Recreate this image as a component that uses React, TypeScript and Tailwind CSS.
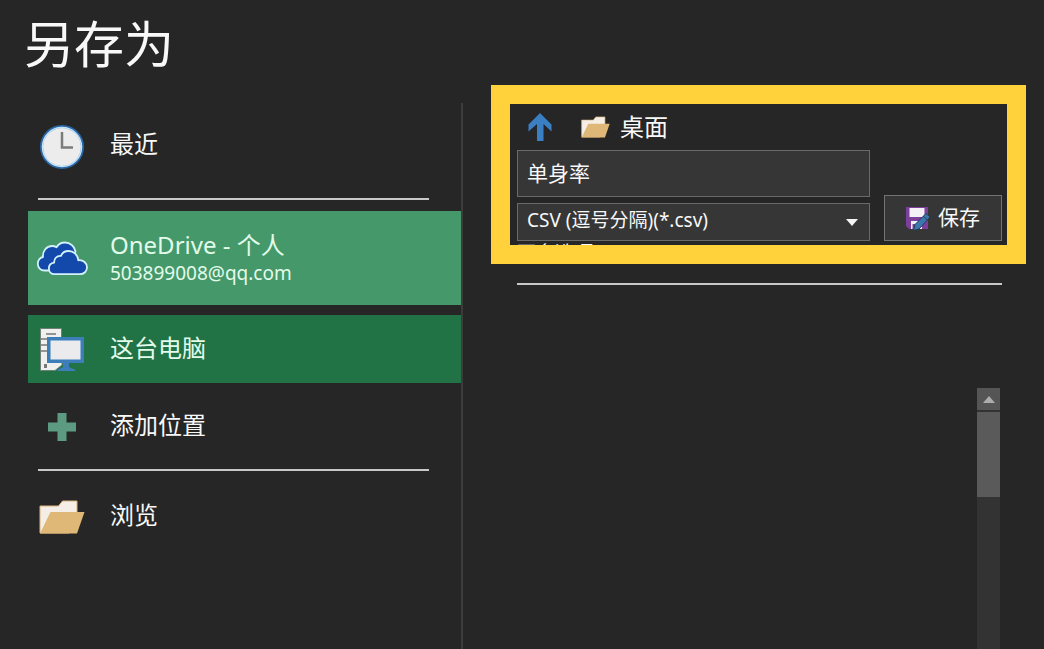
import { useState, type ReactNode } from 'react';

interface PlaceProps {
  icon: ReactNode;
  title: string;
  detail?: string;
  className: string;
  onClick: () => void;
}

function ClockIcon() {
  return (
    <svg width="46" height="46" viewBox="0 0 46 46" aria-hidden="true">
      <circle cx="23" cy="24" r="20.500" fill="#ececec" stroke="#2a68a8" strokeWidth="3" />
      <circle cx="23" cy="24" r="19.500" fill="none" stroke="#c3e2f8" strokeWidth="1.500" />
      <path d="M23 9v15.500h11" fill="none" stroke="#7b7b7b" strokeWidth="2.500" />
    </svg>
  );
}

function CloudIcon() {
  return (
    <svg width="52" height="36" viewBox="0 0 52 36" aria-hidden="true">
      <g fill="#1249ab" stroke="#d3f1fb" strokeWidth="1.800" strokeLinejoin="round">
        <path d="M14 29.500H8.500C4.500 29.500 1.800 26.500 1.800 22.800c0-3.800 2.600-6.300 5.200-6.800C6.500 10 10.500 5 16 5c2 0 3.200.4 4.500 1.200C22.300 3.200 25.300 1.500 29 1.500c5 0 9.500 3.500 10.500 9L34 24z" />
        <path d="M18.500 33.200c-3.400 0-5.600-2.500-5.600-5.700 0-3.200 2.200-5.500 5.300-5.800-.4-4 2.600-6.900 6-6.900h.8C26.200 12 29 10 32.500 10c5.200 0 9.300 3.800 9.800 9.300 4.900-.6 8.700 2.700 8.700 7 0 4-3 6.900-7 6.900z" />
      </g>
    </svg>
  );
}

function ComputerIcon() {
  return (
    <svg width="46" height="46" viewBox="0 0 46 46" aria-hidden="true">
      <path d="M1.500 1.500h21v9H10V35h13v3l-7 5.500H1.500z" fill="#f0f0ee" stroke="#6d8175" />
      <path d="M7 7h10" stroke="#777" strokeWidth="1.500" />
      <path d="M2 12h7M2 18h6M2 24h6" stroke="#777" strokeWidth="1.500" />
      <path d="M5 37h3v4H5z" fill="#777" />
      <path d="M8 10h37v26H8z" fill="#3b7eb9" />
      <path d="M11.500 13.500h30v19h-30z" fill="#ebebee" />
      <path d="M24 36h6v4c2 1.500 5 1.500 7 4H18c1-2.500 4-2.500 6-4z" fill="#3b7eb9" />
    </svg>
  );
}

function PlusIcon() {
  return (
    <svg width="30" height="30" viewBox="0 0 30 30" aria-hidden="true">
      <path d="M10.500 1h9v9.500H29v9h-9.500V29h-9v-9.500H1v-9h9.500z" fill="#5c9b82" />
    </svg>
  );
}

function FolderIcon({ className }: { className: string }) {
  return (
    <svg className={className} viewBox="0 0 46 34" aria-hidden="true">
      <path d="M1 33V6h18.500l4-5H38v12L30 33z" fill="#f5eee6" stroke="#d9b27c" strokeLinejoin="round" />
      <path d="M1 33.500l10.500-21.500H45.500L38 33.500z" fill="#dfb877" />
    </svg>
  );
}

function SaveIcon() {
  return (
    <svg width="24" height="25" viewBox="0 0 24 25" aria-hidden="true">
      <path d="M0 1h22v22H3l-3-3z" fill="#7d3f9c" />
      <path d="M3.500 2h15v9h-15z" fill="#f3f0f6" />
      <path d="M5 15h11v8H5z" fill="#f3f0f6" />
      <path d="M6.500 18h4v5h-4z" fill="#7d3f9c" />
      <path d="M7.500 24.500l1.500-6L20 7.500l4 3.500-11 12z" fill="#3c78b0" stroke="#263b55" />
      <path d="M17.500 10.500l4 3.500" stroke="#263b55" />
    </svg>
  );
}

function Place({ icon, title, detail, className, onClick }: PlaceProps) {
  return (
    <button type="button" onClick={onClick} className={`flex w-full items-center gap-3.5 text-left ${className}`}>
      <span className="flex w-[68px] shrink-0 justify-center pt-0.5">{icon}</span>
      <span className="flex flex-col pb-0.5">
        <span className="text-2xl leading-8">{title}</span>
        {detail && <span className="text-[19px] leading-6">{detail}</span>}
      </span>
    </button>
  );
}

export default function App() {
  const [place, setPlace] = useState('pc');
  const [fileName, setFileName] = useState('单身率');

  return (
    <div className="flex min-h-screen flex-col bg-[#262626] font-['Noto_Sans','Noto_Sans_CJK_SC',sans-serif] text-[#f8f8f8]">
      <header className="flex h-[85px] items-center px-6 pt-0.5">
        <h1 className="text-[50px] leading-[90px]">另存为</h1>
      </header>

      <div className="flex flex-1">
        {/* PLACES */}
        <nav className="mt-[18px] w-[463px] shrink-0 border-r-2 border-[#3c3c3c] pl-7">
          <Place icon={<ClockIcon />} title="最近" className="h-[84px]" onClick={() => setPlace('recent')} />
          <hr className="mt-[11px] mr-8 ml-2.5 border-t-2 border-[#c8c8c8]" />
          <Place
            icon={<CloudIcon />}
            title="OneDrive - 个人"
            detail="503899008@qq.com"
            className="mt-[11px] h-[94px] bg-[#459869] text-[#e2fbea]"
            onClick={() => setPlace('onedrive')}
          />
          <Place
            icon={<ComputerIcon />}
            title="这台电脑"
            className={`mt-2.5 h-[68px] ${place === 'pc' ? 'bg-[#217346] text-[#e2fbea]' : ''}`}
            onClick={() => setPlace('pc')}
          />
          <Place icon={<PlusIcon />} title="添加位置" className="h-[86px]" onClick={() => setPlace('add')} />
          <hr className="mr-8 ml-2.5 border-t-2 border-[#c8c8c8]" />
          <Place icon={<FolderIcon className="h-[34px] w-[46px]" />} title="浏览" className="h-[90px]" onClick={() => setPlace('browse')} />
        </nav>

        {/* SAVE FORM */}
        <main className="flex min-w-0 flex-1 flex-col pr-[18px] pl-7">
          <form
            onSubmit={(e) => e.preventDefault()}
            className="h-[179px] overflow-hidden border-[19px] border-[#ffd13b] pr-[5px] pl-[7px]"
          >
            <div className="flex h-[46px] items-center">
              <button type="button" aria-label="向上" className="ml-2.5">
                <svg width="26" height="30" viewBox="0 0 26 30" aria-hidden="true">
                  <path d="M13 1l11.500 11.500v7L16.500 12v17h-6.500V12L1.500 19.500v-7z" fill="#3a7fc4" />
                </svg>
              </button>
              <FolderIcon className="ml-7 h-6 w-[29px]" />
              <span className="ml-2.5 text-2xl leading-8">桌面</span>
            </div>

            <div className="flex items-end gap-3.5">
              <div className="flex min-w-0 flex-1 flex-col gap-1.5">
                <input
                  aria-label="文件名"
                  value={fileName}
                  onChange={(e) => setFileName(e.target.value)}
                  className="h-[47px] w-full border border-[#6a6a6a] bg-[#363636] px-[9px] pb-1 text-[21px]"
                />
                <div className="relative">
                  <select
                    aria-label="保存类型"
                    className="block h-[38px] w-full appearance-none border border-[#6a6a6a] bg-[#363636] px-[9px] pb-1 text-[19px] leading-6"
                  >
                    <option>CSV (逗号分隔)(*.csv)</option>
                  </select>
                  <svg className="pointer-events-none absolute top-4 right-3" width="12" height="7" viewBox="0 0 12 7" aria-hidden="true">
                    <path d="M0 0h12L6 7z" fill="#f5f5f5" />
                  </svg>
                </div>
              </div>
              <button
                type="submit"
                className="flex h-[46px] w-[118px] items-center justify-center gap-2 border border-[#737373] bg-[#363636] text-[21px]"
              >
                <SaveIcon />
                保存
              </button>
            </div>
            <a href="#options" className="block text-[19px] leading-6">更多选项...</a>
          </form>

          <hr className="mt-[19px] mr-6 ml-[26px] border-t-2 border-[#c8c8c8]" />

          {/* FILE LIST, empty, with its scroll bar */}
          <div className="mt-[103px] mr-[26px] flex flex-1 justify-end">
            <div className="flex w-[23px] flex-col gap-0.5 bg-[#333]">
              <button type="button" aria-label="向上滚动" className="flex h-[22px] items-center justify-center bg-[#555]">
                <svg width="12" height="7" viewBox="0 0 12 7" aria-hidden="true">
                  <path d="M6 0l6 7H0z" fill="#adadad" />
                </svg>
              </button>
              <div className="h-[85px] bg-[#5a5a5a]" />
            </div>
          </div>
        </main>
      </div>
    </div>
  );
}
